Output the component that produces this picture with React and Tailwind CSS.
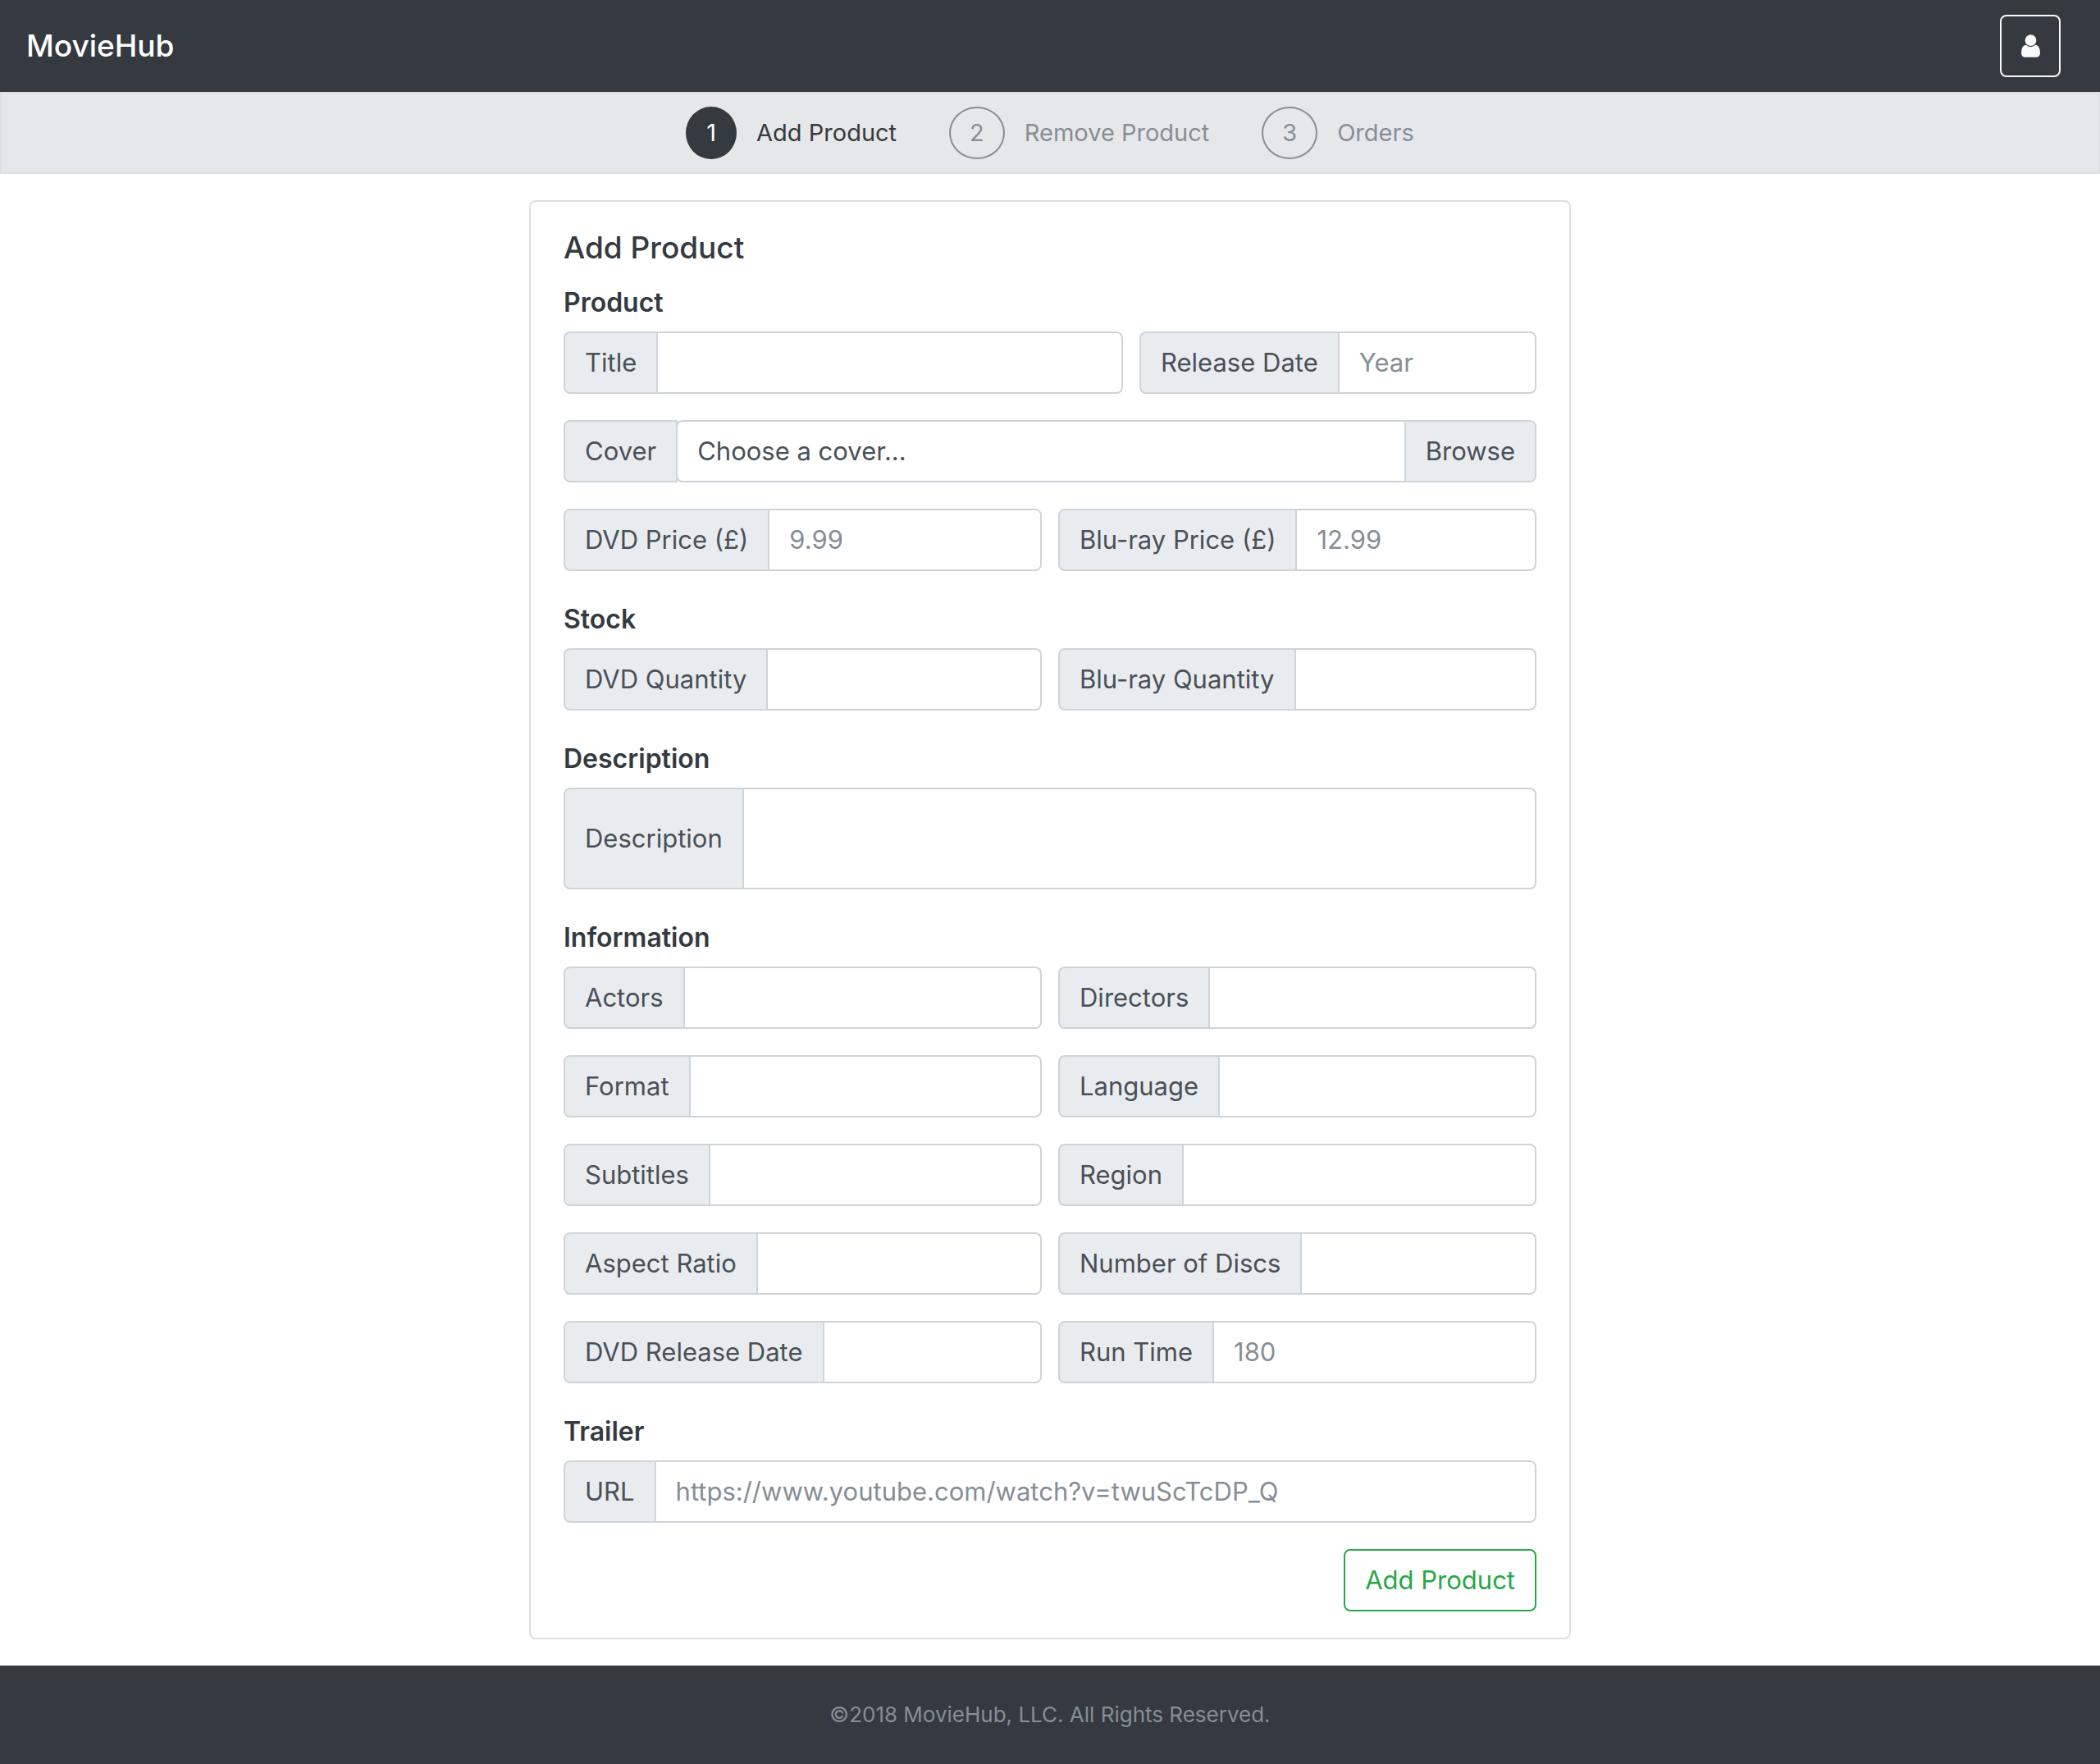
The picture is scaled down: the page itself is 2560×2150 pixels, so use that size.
import { useId } from "react";

function UserIcon() {
  return (
    <svg viewBox="0 0 1280 1792" className="h-8 w-[23px] fill-current" aria-hidden="true">
      <path d="M1280 1399q0 109-62.5 187t-150.5 78h-854q-88 0-150.5-78t-62.5-187q0-85 8.5-160.5t31.5-152 58.5-131 94-89 134.5-34.5q131 128 313 128t313-128q76 0 134.5 34.5t94 89 58.5 131 31.5 152 8.5 160.5zM1024 512q0 159-112.5 271.5t-271.5 112.5-271.5-112.5-112.5-271.5 112.5-271.5 271.5-112.5 271.5 112.5 112.5 271.5z" />
    </svg>
  );
}

const labelClass =
  "flex shrink-0 items-center whitespace-nowrap rounded-l-lg border-2 border-[#ced4da] bg-[#e9ecef] px-6 py-3 leading-[48px]";
const inputClass =
  "min-w-0 flex-1 rounded-r-lg border-2 border-l-0 border-[#ced4da] bg-white px-6 py-3 leading-[48px] placeholder:text-[#868e96] placeholder:opacity-100 focus:outline-none";

function Field({ label, placeholder }) {
  const id = useId();
  return (
    <div className="flex min-w-0">
      <label htmlFor={id} className={labelClass}>{label}</label>
      <input id={id} type="text" placeholder={placeholder} className={inputClass} />
    </div>
  );
}

function FileField() {
  const id = useId();
  return (
    <div className="relative flex">
      <span className={labelClass + " rounded-r-none"}>Cover</span>
      <input id={id} type="file" className="peer sr-only" />
      <label
        htmlFor={id}
        className="-ml-0.5 flex min-w-0 flex-1 cursor-pointer justify-between overflow-hidden rounded-lg border-2 border-[#ced4da] bg-white leading-[48px]"
      >
        <span className="px-6 py-3">Choose a cover...</span>
        <span className="border-l-2 border-[#ced4da] bg-[#e9ecef] px-6 py-3">Browse</span>
      </label>
    </div>
  );
}

function TextAreaField({ label }) {
  const id = useId();
  return (
    <div className="flex">
      <label htmlFor={id} className={labelClass}>{label}</label>
      <textarea id={id} rows={2} className={inputClass + " h-[124px] resize-none"} />
    </div>
  );
}

function Section({ title, children }) {
  return (
    <fieldset className="min-w-0">
      <legend className="mb-4 text-[32px] leading-[38px] font-semibold text-[#343a40]">{title}</legend>
      <div className="flex flex-col gap-8">{children}</div>
    </fieldset>
  );
}

function Pair({ children }) {
  return <div className="grid grid-cols-2 gap-5">{children}</div>;
}

const steps = ["Add Product", "Remove Product", "Orders"];

function Step({ number, label, active }) {
  return (
    <a
      href="#"
      aria-current={active ? "step" : undefined}
      className={active ? "flex items-center gap-6 text-[#343a40]" : "flex items-center gap-6 text-[#868e96]"}
    >
      <span
        className={
          active
            ? "rounded-[50%] border-2 border-[#343a40] bg-[#343a40] px-[23px] leading-[60px] text-white"
            : "rounded-[50%] border-2 border-[#868e96] px-[23px] leading-[60px]"
        }
      >
        {number}
      </span>
      <span>{label}</span>
    </a>
  );
}

export default function App() {
  return (
    <div className="flex min-h-screen flex-col bg-white font-['Inter',sans-serif] text-[31px] text-[#495057]">
      <header className="flex items-center justify-between bg-[#343a40] py-[18px] pr-12 pl-8">
        <a href="#" className="text-[37px] leading-[60px] font-medium text-white">MovieHub</a>
        <button
          type="button"
          aria-label="Account"
          className="flex h-[76px] w-[74px] items-center justify-center rounded-lg border-2 border-[#f8f9fa] text-[#f8f9fa]"
        >
          <UserIcon />
        </button>
      </header>

      <nav className="flex justify-center gap-16 border-2 border-[#dddfe1] bg-[#e6e7e8] py-4 text-[29px]">
        {steps.map((label, i) => (
          <Step key={label} number={i + 1} label={label} active={i === 0} />
        ))}
      </nav>

      <main className="flex-1 py-8">
        <form className="mx-auto w-full max-w-[1270px] rounded-lg border-2 border-[#dfdfdf] px-10 py-8">
          <h1 className="mb-6 text-[37px] leading-[48px] font-medium text-[#343a40]">Add Product</h1>
          <div className="flex flex-col gap-10">
            <Section title="Product">
              <div className="grid grid-cols-[682fr_484fr] gap-5">
                <Field label="Title" />
                <Field label="Release Date" placeholder="Year" />
              </div>
              <FileField />
              <Pair>
                <Field label="DVD Price (£)" placeholder="9.99" />
                <Field label="Blu-ray Price (£)" placeholder="12.99" />
              </Pair>
            </Section>
            <Section title="Stock">
              <Pair>
                <Field label="DVD Quantity" />
                <Field label="Blu-ray Quantity" />
              </Pair>
            </Section>
            <Section title="Description">
              <TextAreaField label="Description" />
            </Section>
            <Section title="Information">
              <Pair>
                <Field label="Actors" />
                <Field label="Directors" />
              </Pair>
              <Pair>
                <Field label="Format" />
                <Field label="Language" />
              </Pair>
              <Pair>
                <Field label="Subtitles" />
                <Field label="Region" />
              </Pair>
              <Pair>
                <Field label="Aspect Ratio" />
                <Field label="Number of Discs" />
              </Pair>
              <Pair>
                <Field label="DVD Release Date" />
                <Field label="Run Time" placeholder="180" />
              </Pair>
            </Section>
            <Section title="Trailer">
              <Field label="URL" placeholder="https://www.youtube.com/watch?v=twuScTcDP_Q" />
            </Section>
          </div>
          <div className="mt-8 flex justify-end">
            <button
              type="submit"
              className="rounded-lg border-2 border-[#28a745] px-6 py-3 leading-[48px] text-[#28a745]"
            >
              Add Product
            </button>
          </div>
        </form>
      </main>

      <footer className="bg-[#343a40] py-10 text-center text-[26px] leading-[40px] text-[#868e96]">
        ©2018 MovieHub, LLC. All Rights Reserved.
      </footer>
    </div>
  );
}
